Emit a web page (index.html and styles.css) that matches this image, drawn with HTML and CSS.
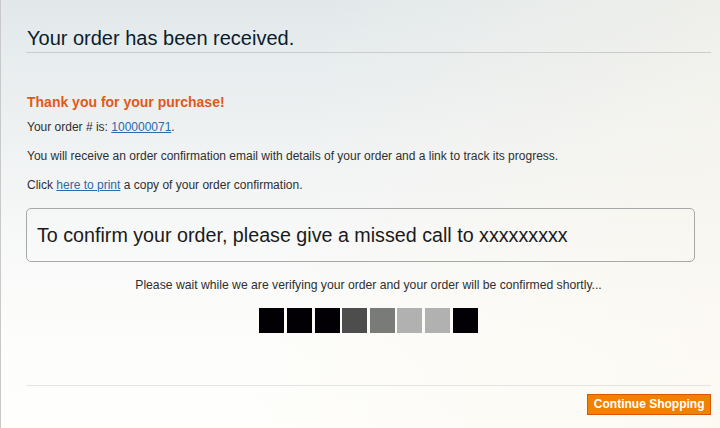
FILE: index.html
```html
<!DOCTYPE html>
<html>
<head>
<meta charset="utf-8">
<link rel="stylesheet" href="styles.css">
</head>
<body>
<div class="page">
  <div class="page-title">
    <h1>Your order has been received.</h1>
  </div>
  <h2 class="sub-title">Thank you for your purchase!</h2>
  <p class="first">Your order # is: <a href="#">100000071</a>.</p>
  <p>You will receive an order confirmation email with details of your order and a link to track its progress.</p>
  <p>Click <a href="#">here to print</a> a copy of your order confirmation.</p>
  <div class="confirm-box">To confirm your order, please give a missed call to xxxxxxxxx</div>
  <p class="wait">Please wait while we are verifying your order and your order will be confirmed shortly...</p>
  <div class="loader">
    <span class="sq s1"></span><span class="sq s1"></span><span class="sq s1"></span><span class="sq s2"></span><span class="sq s3"></span><span class="sq s4"></span><span class="sq s4"></span><span class="sq s1"></span>
  </div>
  <div class="buttons-set">
    <button class="button">Continue Shopping</button>
  </div>
</div>
</body>
</html>
```
FILE: styles.css
```css
html, body { height: 100%; }
body {
  margin: 0;
  border-left: 1px solid #c9c9c9;
  box-sizing: border-box;
  font-family: "Liberation Sans", Arial, sans-serif;
  font-size: 12px;
  color: #2f2f2f;
  background: linear-gradient(100deg, rgba(226,233,236,0) 40%, rgba(250,246,236,0.6) 100%),
              linear-gradient(180deg, #e2e8ea 0%, #eef1f2 30%, #f7f8f8 55%, #fdfdfb 80%, #fefefc 100%);
  overflow: hidden;
}
.page {
  padding: 0 9px 0 25px;
}
.page-title {
  border-bottom: 1px solid #cccccc;
  padding-top: 26px;
  padding-bottom: 2px;
}
.page-title h1 {
  margin: 0;
  font-size: 20px;
  font-weight: normal;
  line-height: 24px;
  color: #0a1d2e;
  padding-left: 1px;
}
.sub-title {
  margin: 40px 0 0;
  font-size: 14px;
  line-height: 18px;
  font-weight: bold;
  color: #e05a17;
  padding-left: 1px;
}
p {
  margin: 6px 0 14px;
  line-height: 15px;
  padding-left: 1px;
}
p.first { margin-top: 9px; }
a { color: #2b6aab; }
.confirm-box {
  margin: 15px 16px 0 0;
  border: 1px solid #a8a8a8;
  border-radius: 5px;
  padding: 14px 10px 14px;
  font-size: 19.7px;
  line-height: 24px;
  color: #1a1a1a;
}
.wait {
  text-align: center;
  margin: 16px 0 0;
  padding-left: 0;
  font-size: 12.2px;
}
.loader {
  display: flex;
  justify-content: center;
  gap: 2.6px;
  margin-top: 15px;
}
.sq { width: 25px; height: 25px; }
.s1 { background: #020005; }
.s2 { background: #4d4d4d; }
.s3 { background: #797b78; }
.s4 { background: #b1b1b1; }
.buttons-set {
  margin-top: 52px;
  border-top: 1px solid #e4e4e4;
  padding-top: 8px;
  display: flex;
  justify-content: flex-end;
}
.button {
  font-family: "Liberation Sans", Arial, sans-serif;
  font-size: 12px;
  font-weight: bold;
  color: #fff;
  background: #f18200;
  border: 1px solid #de5400;
  padding: 0 5.5px;
  height: 21px;
  line-height: 19px;
  cursor: pointer;
}
```
